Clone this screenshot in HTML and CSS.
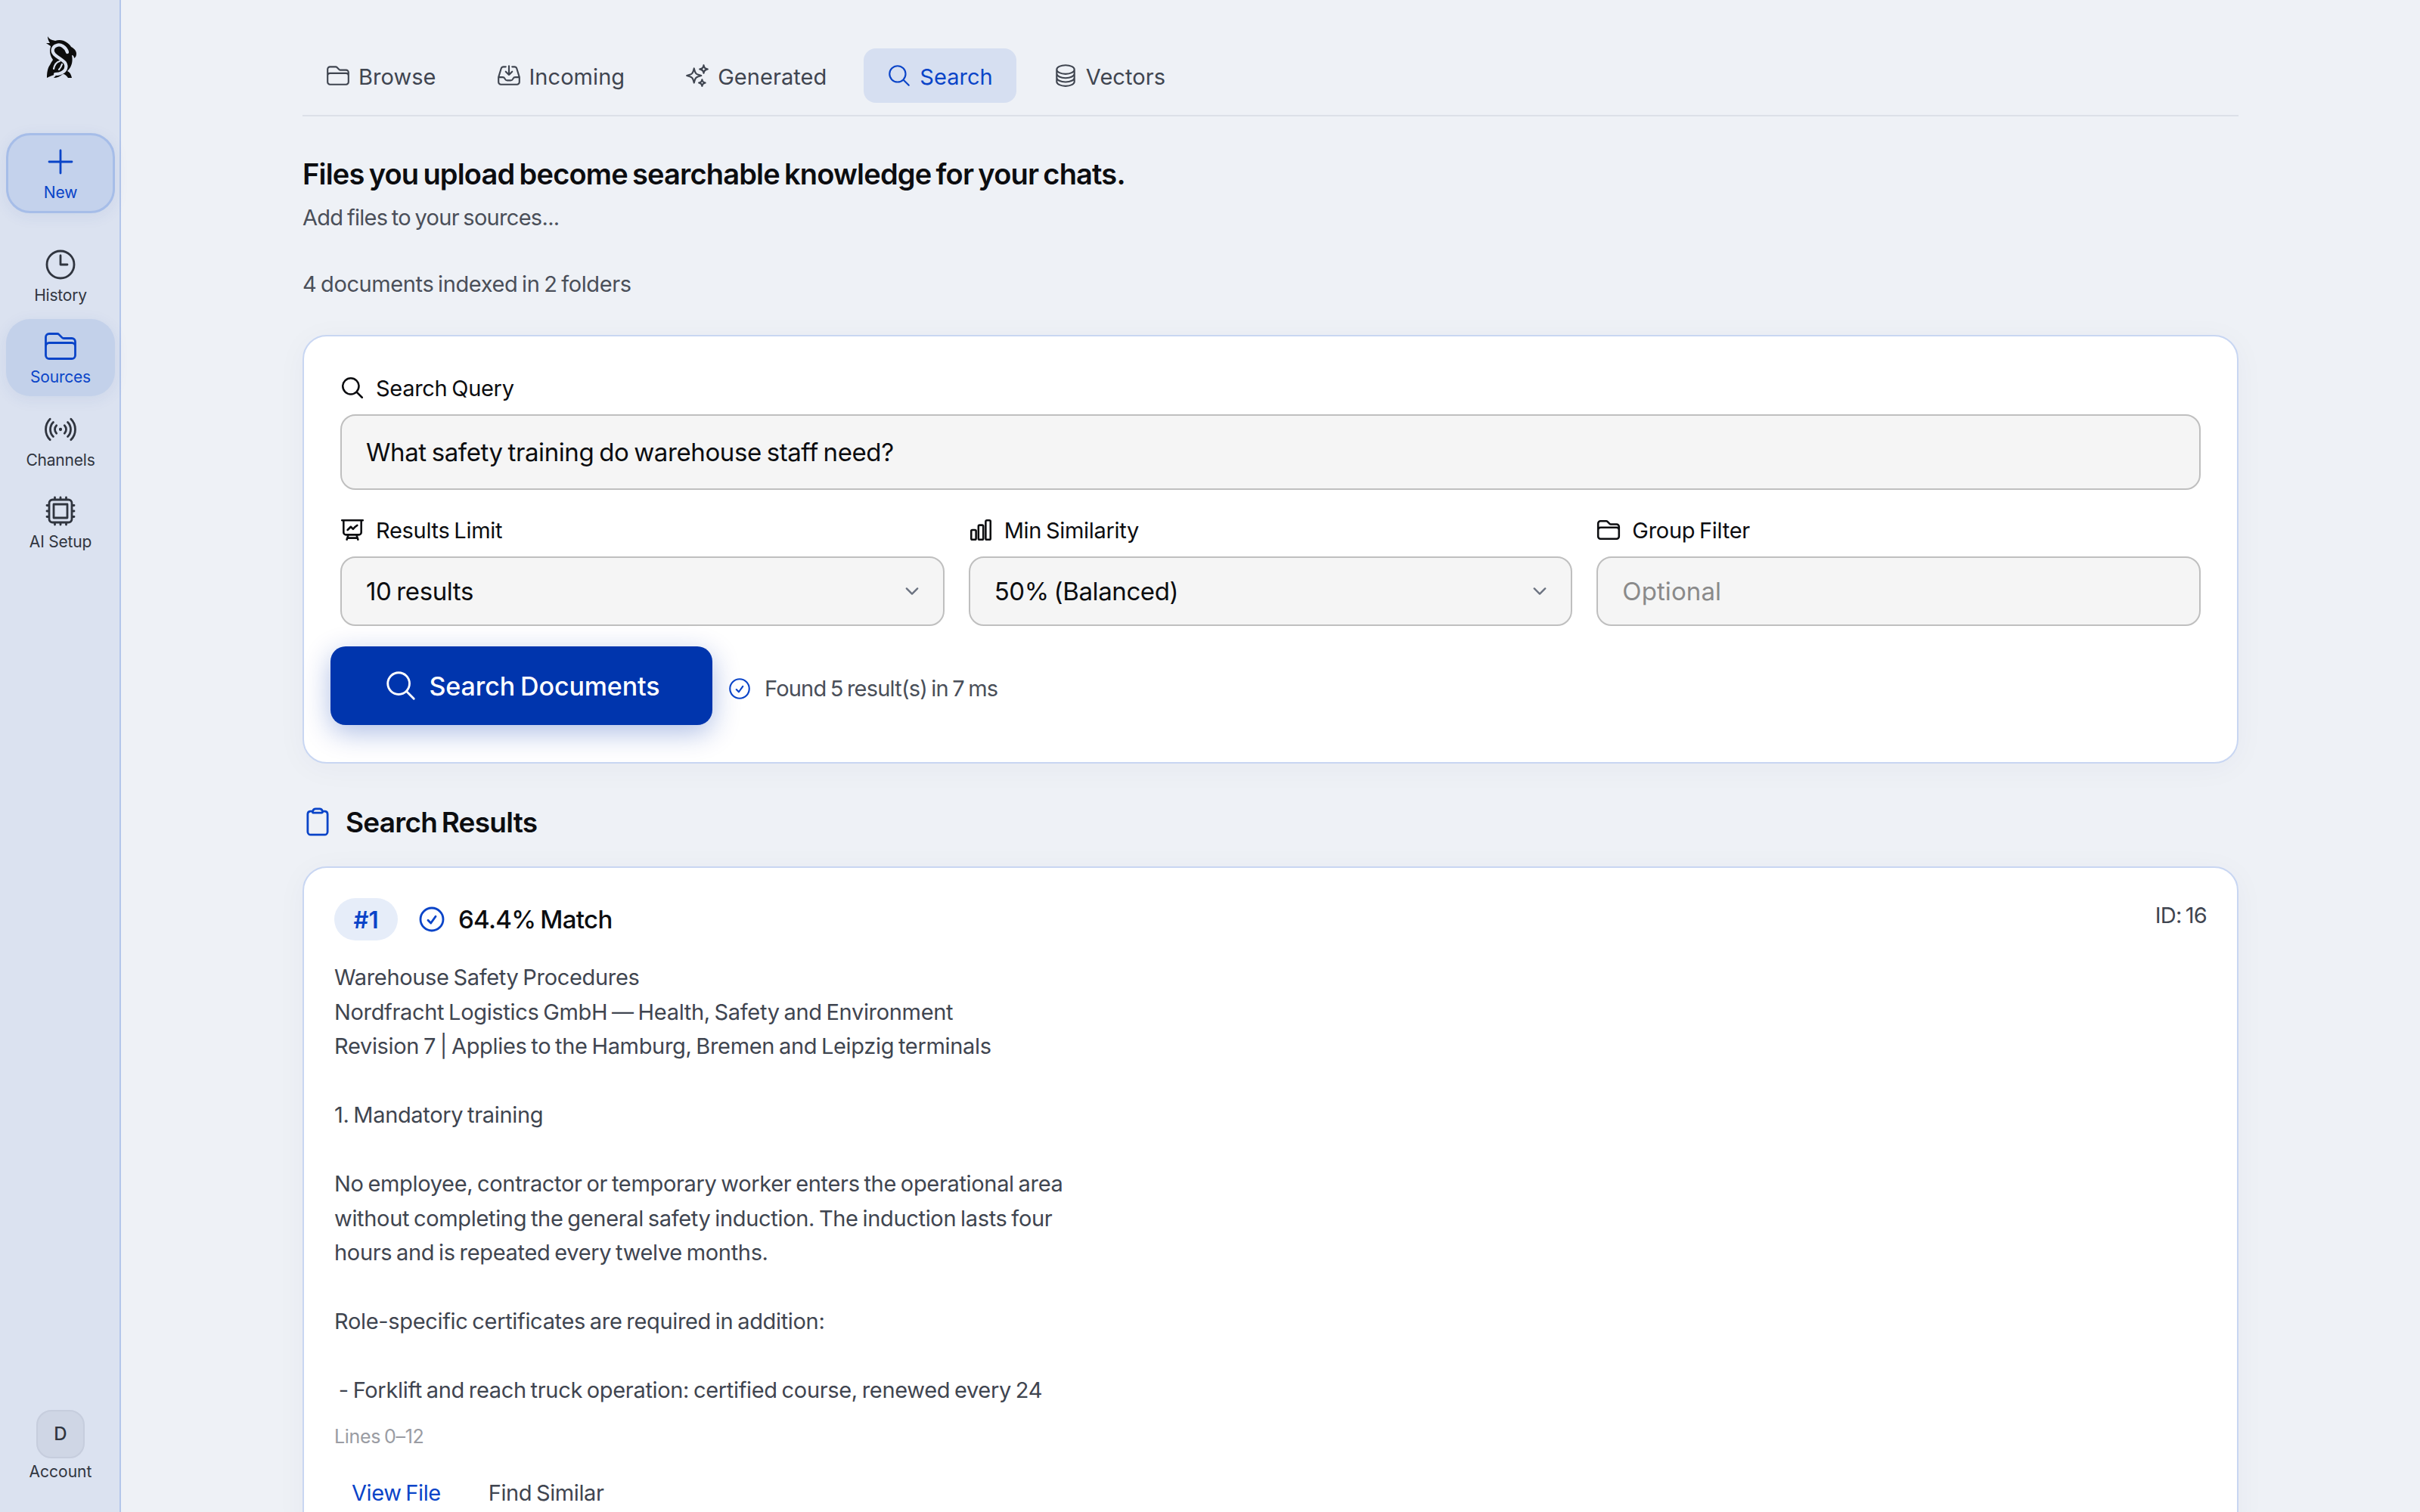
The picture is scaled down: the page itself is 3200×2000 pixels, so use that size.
FILE: index.html
```html
<!DOCTYPE html>
<html lang="en">
<head>
<meta charset="utf-8">
<title>Sources</title>
<link rel="stylesheet" href="styles.css">
</head>
<body>
<svg class="defs" aria-hidden="true">
  <symbol id="i-folder" viewBox="0 0 24 24"><path d="M2.25 12.75V12A2.25 2.25 0 0 1 4.5 9.75h15A2.25 2.25 0 0 1 21.75 12v.75m-8.69-6.44-2.12-2.12a1.5 1.5 0 0 0-1.061-.44H4.5A2.25 2.25 0 0 0 2.25 6v12a2.25 2.25 0 0 0 2.25 2.25h15A2.25 2.25 0 0 0 21.75 18V9a2.25 2.25 0 0 0-2.25-2.25h-5.379a1.5 1.5 0 0 1-1.06-.44Z"/></symbol>
  <symbol id="i-clock" viewBox="0 0 24 24"><path d="M12 6v6h4.5m4.5 0a9 9 0 1 1-18 0 9 9 0 0 1 18 0Z"/></symbol>
  <symbol id="i-plus" viewBox="0 0 24 24"><path d="M12 4.5v15m7.5-7.5h-15"/></symbol>
  <symbol id="i-signal" viewBox="0 0 24 24"><path d="M9.348 14.652a3.75 3.75 0 0 1 0-5.304m5.304 0a3.75 3.75 0 0 1 0 5.304m-7.425 2.121a6.75 6.75 0 0 1 0-9.546m9.546 0a6.75 6.75 0 0 1 0 9.546M5.106 18.894c-3.808-3.807-3.808-9.98 0-13.788m13.788 0c3.808 3.807 3.808 9.98 0 13.788M12 12h.008v.008H12V12Zm.375 0a.375.375 0 1 1-.75 0 .375.375 0 0 1 .75 0Z"/></symbol>
  <symbol id="i-chip" viewBox="0 0 24 24"><path d="M8.25 3v1.5M4.5 8.25H3m18 0h-1.5M4.5 12H3m18 0h-1.5m-15 3.75H3m18 0h-1.5M8.25 19.5V21M12 3v1.5m0 15V21m3.75-18v1.5m0 15V21m-9-1.5h10.5a2.25 2.25 0 0 0 2.25-2.25V6.75a2.25 2.25 0 0 0-2.25-2.25H6.75A2.25 2.25 0 0 0 4.5 6.75v10.5a2.25 2.25 0 0 0 2.25 2.25Zm.75-12h9v9h-9v-9Z"/></symbol>
  <symbol id="i-search" viewBox="0 0 24 24"><path d="m21 21-5.197-5.197m0 0A7.5 7.5 0 1 0 5.196 5.196a7.5 7.5 0 0 0 10.607 10.607Z"/></symbol>
  <symbol id="i-inbox" viewBox="0 0 24 24"><path d="M9 3.75H6.912a2.25 2.25 0 0 0-2.15 1.588L2.35 13.177a2.25 2.25 0 0 0-.1.661V18a2.25 2.25 0 0 0 2.25 2.25h15A2.25 2.25 0 0 0 21.75 18v-4.162c0-.224-.034-.447-.1-.661L19.24 5.338a2.25 2.25 0 0 0-2.15-1.588H15M2.25 13.5h3.86a2.25 2.25 0 0 1 2.012 1.244l.256.512a2.25 2.25 0 0 0 2.013 1.244h3.218a2.25 2.25 0 0 0 2.013-1.244l.256-.512a2.25 2.25 0 0 1 2.013-1.244h3.859M12 3v8.25m0 0-3-3m3 3 3-3"/></symbol>
  <symbol id="i-sparkles" viewBox="0 0 24 24"><path d="M9.813 15.904 9 18.75l-.813-2.846a4.5 4.5 0 0 0-3.09-3.09L2.25 12l2.846-.813a4.5 4.5 0 0 0 3.09-3.09L9 5.25l.813 2.846a4.5 4.5 0 0 0 3.09 3.09L15.75 12l-2.846.813a4.5 4.5 0 0 0-3.09 3.09ZM18.259 8.715 18 9.75l-.259-1.035a3.375 3.375 0 0 0-2.455-2.456L14.25 6l1.036-.259a3.375 3.375 0 0 0 2.455-2.456L18 2.25l.259 1.035a3.375 3.375 0 0 0 2.456 2.456L21.75 6l-1.035.259a3.375 3.375 0 0 0-2.456 2.456ZM16.894 20.567 16.5 21.75l-.394-1.183a2.25 2.25 0 0 0-1.423-1.423L13.5 18.75l1.183-.394a2.25 2.25 0 0 0 1.423-1.423l.394-1.183.394 1.183a2.25 2.25 0 0 0 1.423 1.423l1.183.394-1.183.394a2.25 2.25 0 0 0-1.423 1.423Z"/></symbol>
  <symbol id="i-stack" viewBox="0 0 24 24"><path d="M20.25 6.375c0 2.278-3.694 4.125-8.25 4.125S3.75 8.653 3.75 6.375m16.5 0c0-2.278-3.694-4.125-8.25-4.125S3.75 4.097 3.75 6.375m16.5 0v11.25c0 2.278-3.694 4.125-8.25 4.125s-8.25-1.847-8.25-4.125V6.375m16.5 0v3.75m-16.5-3.75v3.75m16.5 0v3.75C20.25 16.153 16.556 18 12 18s-8.25-1.847-8.25-4.125v-3.75m16.5 0c0 2.278-3.694 4.125-8.25 4.125s-8.25-1.847-8.25-4.125"/></symbol>
  <symbol id="i-present" viewBox="0 0 24 24"><path d="M3.75 3v11.25A2.25 2.25 0 0 0 6 16.5h2.25M3.75 3h-1.5m1.5 0h16.5m0 0h1.5m-1.5 0v11.25A2.25 2.25 0 0 1 18 16.5h-2.25m-7.5 0h7.5m-7.5 0-1 3m8.5-3 1 3m0 0 .5 1.5m-.5-1.5h-9.5m0 0-.5 1.5m.75-9 3-3 2.148 2.148A12.061 12.061 0 0 1 16.5 7.605"/></symbol>
  <symbol id="i-bars" viewBox="0 0 24 24"><path d="M3 13.125C3 12.504 3.504 12 4.125 12h2.25c.621 0 1.125.504 1.125 1.125v6.75C7.5 20.496 6.996 21 6.375 21h-2.25A1.125 1.125 0 0 1 3 19.875v-6.75ZM9.75 8.625c0-.621.504-1.125 1.125-1.125h2.25c.621 0 1.125.504 1.125 1.125v11.25c0 .621-.504 1.125-1.125 1.125h-2.25a1.125 1.125 0 0 1-1.125-1.125V8.625ZM16.5 4.125c0-.621.504-1.125 1.125-1.125h2.25C20.496 3 21 3.504 21 4.125v15.75c0 .621-.504 1.125-1.125 1.125h-2.25a1.125 1.125 0 0 1-1.125-1.125V4.125Z"/></symbol>
  <symbol id="i-check" viewBox="0 0 24 24"><path d="M9 12.75 11.25 15 15 9.75M21 12a9 9 0 1 1-18 0 9 9 0 0 1 18 0Z"/></symbol>
  <symbol id="i-clip" viewBox="0 0 24 24"><path d="M15.666 3.888A2.25 2.25 0 0 0 13.5 2.25h-3c-1.03 0-1.9.693-2.166 1.638m7.332 0c.055.194.084.4.084.612v0a.75.75 0 0 1-.75.75H9a.75.75 0 0 1-.75-.75v0c0-.212.03-.418.084-.612m7.332 0c.646.049 1.288.11 1.927.184 1.1.128 1.907 1.077 1.907 2.185V19.5a2.25 2.25 0 0 1-2.25 2.25H6.75A2.25 2.25 0 0 1 4.5 19.5V6.257c0-1.108.806-2.057 1.907-2.185a48.208 48.208 0 0 1 1.927-.184"/></symbol>
  <symbol id="i-chev" viewBox="0 0 20 20"><path d="m6 8 4 4 4-4"/></symbol>
</svg>

<div class="app">
  <nav class="rail">
    <svg class="logo" viewBox="0 0 44 56" aria-label="Logo">
      <path class="logo-body" d="M5 0C7 4 11 5 15 6C20 4 26 5 30 8C33 10 35 12 36 14C40 16 43 19 43 23C43 26 42 28 40 29C40 27 39 25 37 25C38 30 38 36 35 41C33 44 32 45 31 46C34 47 36 50 37 55L32 55C30 52 28 50 25 50C22 53 17 55 13 55C14 54 16 52 17 50C12 51 8 53 4 55C4 48 5 42 8 38C10 34 11 33 12 31C9 27 8 23 8 19C8 16 9 15 9 13L3 9L8 9C6 6 5 3 5 0Z"/>
      <path class="logo-s" d="M31 21C29 14 22 10 17 12C11 14 10 20 14 24C18 28 25 31 28 35C31 40 29 46 24 48C21 50 18 50 15 50"/>
      <path class="logo-s logo-s-thin" d="M21 33C17 34 14 38 13 43M20 44C22 42 23 40 24 37"/>
    </svg>

    <a class="rail-item rail-new"><svg class="ico rail-ico"><use href="#i-plus"/></svg><span>New</span></a>
    <a class="rail-item rail-history"><svg class="ico rail-ico"><use href="#i-clock"/></svg><span>History</span></a>
    <a class="rail-item rail-active"><svg class="ico rail-ico"><use href="#i-folder"/></svg><span>Sources</span></a>
    <a class="rail-item"><svg class="ico rail-ico"><use href="#i-signal"/></svg><span>Channels</span></a>
    <a class="rail-item"><svg class="ico rail-ico"><use href="#i-chip"/></svg><span>AI Setup</span></a>

    <a class="rail-account"><span class="avatar">D</span><span>Account</span></a>
  </nav>

  <main class="main">
    <div class="tabs">
      <a class="tab"><svg class="ico tab-ico"><use href="#i-folder"/></svg>Browse</a>
      <a class="tab"><svg class="ico tab-ico"><use href="#i-inbox"/></svg>Incoming</a>
      <a class="tab"><svg class="ico tab-ico"><use href="#i-sparkles"/></svg>Generated</a>
      <a class="tab tab-active"><svg class="ico tab-ico"><use href="#i-search"/></svg>Search</a>
      <a class="tab"><svg class="ico tab-ico"><use href="#i-stack"/></svg>Vectors</a>
    </div>

    <h1 class="title">Files you upload become searchable knowledge for your chats.</h1>
    <p class="sub">Add files to your sources...</p>
    <p class="count">4 documents indexed in 2 folders</p>

    <section class="card search-card">
      <label class="label"><svg class="ico label-ico"><use href="#i-search"/></svg>Search Query</label>
      <div class="field field-query">What safety training do warehouse staff need?</div>

      <div class="filters">
        <div class="filter">
          <label class="label"><svg class="ico label-ico"><use href="#i-present"/></svg>Results Limit</label>
          <div class="field field-select">10 results<svg class="ico chev"><use href="#i-chev"/></svg></div>
        </div>
        <div class="filter">
          <label class="label"><svg class="ico label-ico"><use href="#i-bars"/></svg>Min Similarity</label>
          <div class="field field-select">50% (Balanced)<svg class="ico chev"><use href="#i-chev"/></svg></div>
        </div>
        <div class="filter">
          <label class="label"><svg class="ico label-ico"><use href="#i-folder"/></svg>Group Filter</label>
          <div class="field field-select field-empty">Optional</div>
        </div>
      </div>

      <div class="actions">
        <button class="btn"><svg class="ico btn-ico"><use href="#i-search"/></svg>Search Documents</button>
        <span class="status"><svg class="ico status-ico"><use href="#i-check"/></svg>Found 5 result(s) in 7 ms</span>
      </div>
    </section>

    <h2 class="results-title"><svg class="ico results-ico"><use href="#i-clip"/></svg>Search Results</h2>

    <article class="card result">
      <header class="result-head">
        <span class="rank">#1</span>
        <svg class="ico match-ico"><use href="#i-check"/></svg>
        <span class="match">64.4% Match</span>
        <span class="rid">ID: 16</span>
      </header>
      <pre class="excerpt">Warehouse Safety Procedures
Nordfracht Logistics GmbH — Health, Safety and Environment
Revision 7 | Applies to the Hamburg, Bremen and Leipzig terminals

1. Mandatory training

No employee, contractor or temporary worker enters the operational area
without completing the general safety induction. The induction lasts four
hours and is repeated every twelve months.

Role-specific certificates are required in addition:

 - Forklift and reach truck operation: certified course, renewed every 24</pre>
      <div class="lines">Lines 0–12</div>
      <div class="result-actions">
        <a class="link link-primary">View File</a>
        <a class="link">Find Similar</a>
      </div>
    </article>
  </main>
</div>
</body>
</html>
```

FILE: styles.css
```css
* { box-sizing: border-box; }
html, body { margin: 0; height: 100%; }
body {
  font-family: Inter, "Liberation Sans", sans-serif;
  background: #eef1f6;
  color: #3f4550;
  overflow: hidden;
}
.defs { display: none; }
.ico {
  fill: none;
  stroke: currentColor;
  stroke-width: 1.5;
  stroke-linecap: round;
  stroke-linejoin: round;
  flex: none;
}
.app { display: flex; height: 2000px; overflow: hidden; }

/* Rail */
.rail {
  width: 160px;
  flex: none;
  background: #dbe2f0;
  border-right: 2px solid #b3c6ea;
  display: flex;
  flex-direction: column;
  align-items: center;
  padding: 48px 6px 0 8px;
}
.logo { width: 44px; height: 56px; margin-bottom: 72px; flex: none; }
.logo-body { fill: #0d0d0d; }
.logo-s { fill: none; stroke: #dbe2f0; stroke-width: 4.2; stroke-linecap: round; }
.logo-s-thin { stroke-width: 2.2; }
.rail-item {
  width: 144px;
  height: 104px;
  display: flex;
  flex-direction: column;
  align-items: center;
  border-radius: 32px;
  font-size: 21px;
  line-height: 26px;
  letter-spacing: -.2px;
  color: #30353f;
  padding-top: 16px;
  margin-top: 4px;
}
.rail-ico { width: 48px; height: 48px; margin-bottom: 4px; stroke-width: 1.4; }
.rail-new {
  height: 106px;
  margin-top: 0;
  color: #0a44c8;
  background: #c4d2ec;
  border: 3px solid #a6bde8;
  box-shadow: 0 4px 20px rgba(40, 80, 170, .08);
  padding-top: 11px;
  margin-bottom: 30px;
}
.rail-history { margin-top: 4px; height: 106px; padding-top: 10px; }
.rail-active {
  color: #0a44c8;
  background: #c3d1ea;
  box-shadow: 0 4px 20px rgba(40, 80, 170, .08);
  height: 102px;
  margin-top: 0;
  padding-top: 12px;
}
.rail-account {
  margin-top: auto;
  margin-bottom: 40px;
  display: flex;
  flex-direction: column;
  align-items: center;
  gap: 5px;
  font-size: 21px;
  line-height: 26px;
  color: #30353f;
}
.avatar {
  width: 64px;
  height: 64px;
  border-radius: 20px;
  background: #cfd6e5;
  border: 2px solid #c6cddd;
  display: flex;
  align-items: center;
  justify-content: center;
  font-size: 24px;
  font-weight: 500;
}

/* Main */
.main { flex: 1; min-width: 0; padding: 64px 240px 0; word-spacing: -2px; }
.tabs {
  display: flex;
  gap: 18px;
  height: 90px;
  border-bottom: 2px solid #dce0e8;
}
.tab {
  height: 72px;
  padding: 2px 31px 0 30px;
  display: flex;
  align-items: center;
  gap: 10px;
  font-size: 29px;
  letter-spacing: .05px;
  border-radius: 16px;
  color: #3f4550;
}
.tab-ico { width: 34px; height: 34px; margin-top: -2px; }
.tab-active { background: #d6dff1; color: #0a44c8; }

.title {
  margin: 50px 0 0;
  font-size: 38px;
  line-height: 52px;
  font-weight: 600;
  letter-spacing: -.82px;
  word-spacing: -2.6px;
  color: #0c0d10;
}
.sub, .count { font-size: 29px; line-height: 40px; color: #4a4f59; margin: 0; letter-spacing: -.4px; }
.sub { margin-top: 12px; letter-spacing: -.7px; }
.count { margin-top: 48px; }

.card {
  background: #fff;
  border: 2px solid #c8d6f2;
  border-radius: 32px;
  box-shadow: 0 6px 40px rgba(40, 60, 110, .04);
}
.search-card { margin-top: 47px; height: 567px; padding: 48px 48px 0; }
.label {
  display: flex;
  align-items: center;
  gap: 14px;
  height: 40px;
  font-size: 29px;
  font-weight: 400;
  letter-spacing: -.3px;
  color: #0c0d10;
}
.label-ico { width: 34px; height: 34px; margin-left: -1px; stroke-width: 1.8; }
.field {
  background: #f5f5f5;
  border: 2px solid #bfbfbf;
  border-radius: 20px;
  display: flex;
  align-items: center;
  padding: 0 32px;
  font-size: 33px;
  letter-spacing: -.4px;
  color: #0c0d10;
}
.field-query { height: 100px; margin-top: 15px; }
.filters { display: grid; grid-template-columns: repeat(3, 1fr); gap: 32px; margin-top: 33px; }
.field-select { height: 92px; margin-top: 15px; justify-content: space-between; }
.field-empty { color: #8a8a8a; letter-spacing: .1px; }
.chev { width: 36px; height: 36px; color: #6b7280; margin-right: -9px; stroke-width: 1.3; }
.actions { display: flex; align-items: center; margin: 27px 0 0 -13px; }
.btn {
  width: 505px;
  height: 104px;
  border: 0;
  border-radius: 20px;
  background: #0035ad;
  color: #fff;
  font: 500 34px Inter, "Liberation Sans", sans-serif;
  letter-spacing: -.1px;
  word-spacing: -2px;
  display: flex;
  align-items: center;
  justify-content: center;
  gap: 15px;
  box-shadow: 0 10px 36px rgba(0, 53, 173, .32);
}
.btn-ico { width: 46px; height: 46px; stroke-width: 1.5; }
.status {
  margin: 7px 0 0 19px;
  display: flex;
  align-items: center;
  gap: 16px;
  font-size: 29px;
  letter-spacing: -.8px;
  color: #4a4f59;
}
.status-ico { width: 34px; height: 34px; color: #0a44c8; }

.results-title {
  margin: 53px 0 0;
  height: 48px;
  display: flex;
  align-items: center;
  gap: 16px;
  font-size: 37px;
  font-weight: 600;
  letter-spacing: -.75px;
  word-spacing: -3px;
  color: #0c0d10;
}
.results-ico { width: 42px; height: 42px; color: #0a44c8; stroke-width: 1.6; margin-left: -1px; }

.result { margin-top: 35px; padding: 39px 40px 0; height: 900px; }
.result-head { display: flex; align-items: center; height: 58px; }
.rank {
  width: 84px;
  height: 56px;
  border-radius: 28px;
  background: #e6edf9;
  color: #0a44c8;
  font-size: 31px;
  font-weight: 600;
  display: flex;
  align-items: center;
  justify-content: center;
}
.match-ico { width: 40px; height: 40px; color: #0a44c8; margin-left: 25px; stroke-width: 1.7; }
.match { margin-left: 15px; font-size: 33px; font-weight: 500; letter-spacing: -.7px; color: #0c0d10; }
.rid { margin: -12px 0 0 auto; font-size: 29px; letter-spacing: -.8px; color: #3f4550; }
.excerpt {
  margin: 25px 0 0;
  font-family: inherit;
  font-size: 29px;
  line-height: 45.5px;
  letter-spacing: -.33px;
  color: #3f4550;
  white-space: pre;
}
.lines { margin-top: 22px; font-size: 25px; line-height: 32px; color: #9a9ca3; letter-spacing: -.3px; }
.result-actions { display: flex; gap: 63px; margin-top: 41px; padding-left: 23px; font-size: 29px; letter-spacing: -.4px; }
.link-primary { color: #0a44c8; }
```
